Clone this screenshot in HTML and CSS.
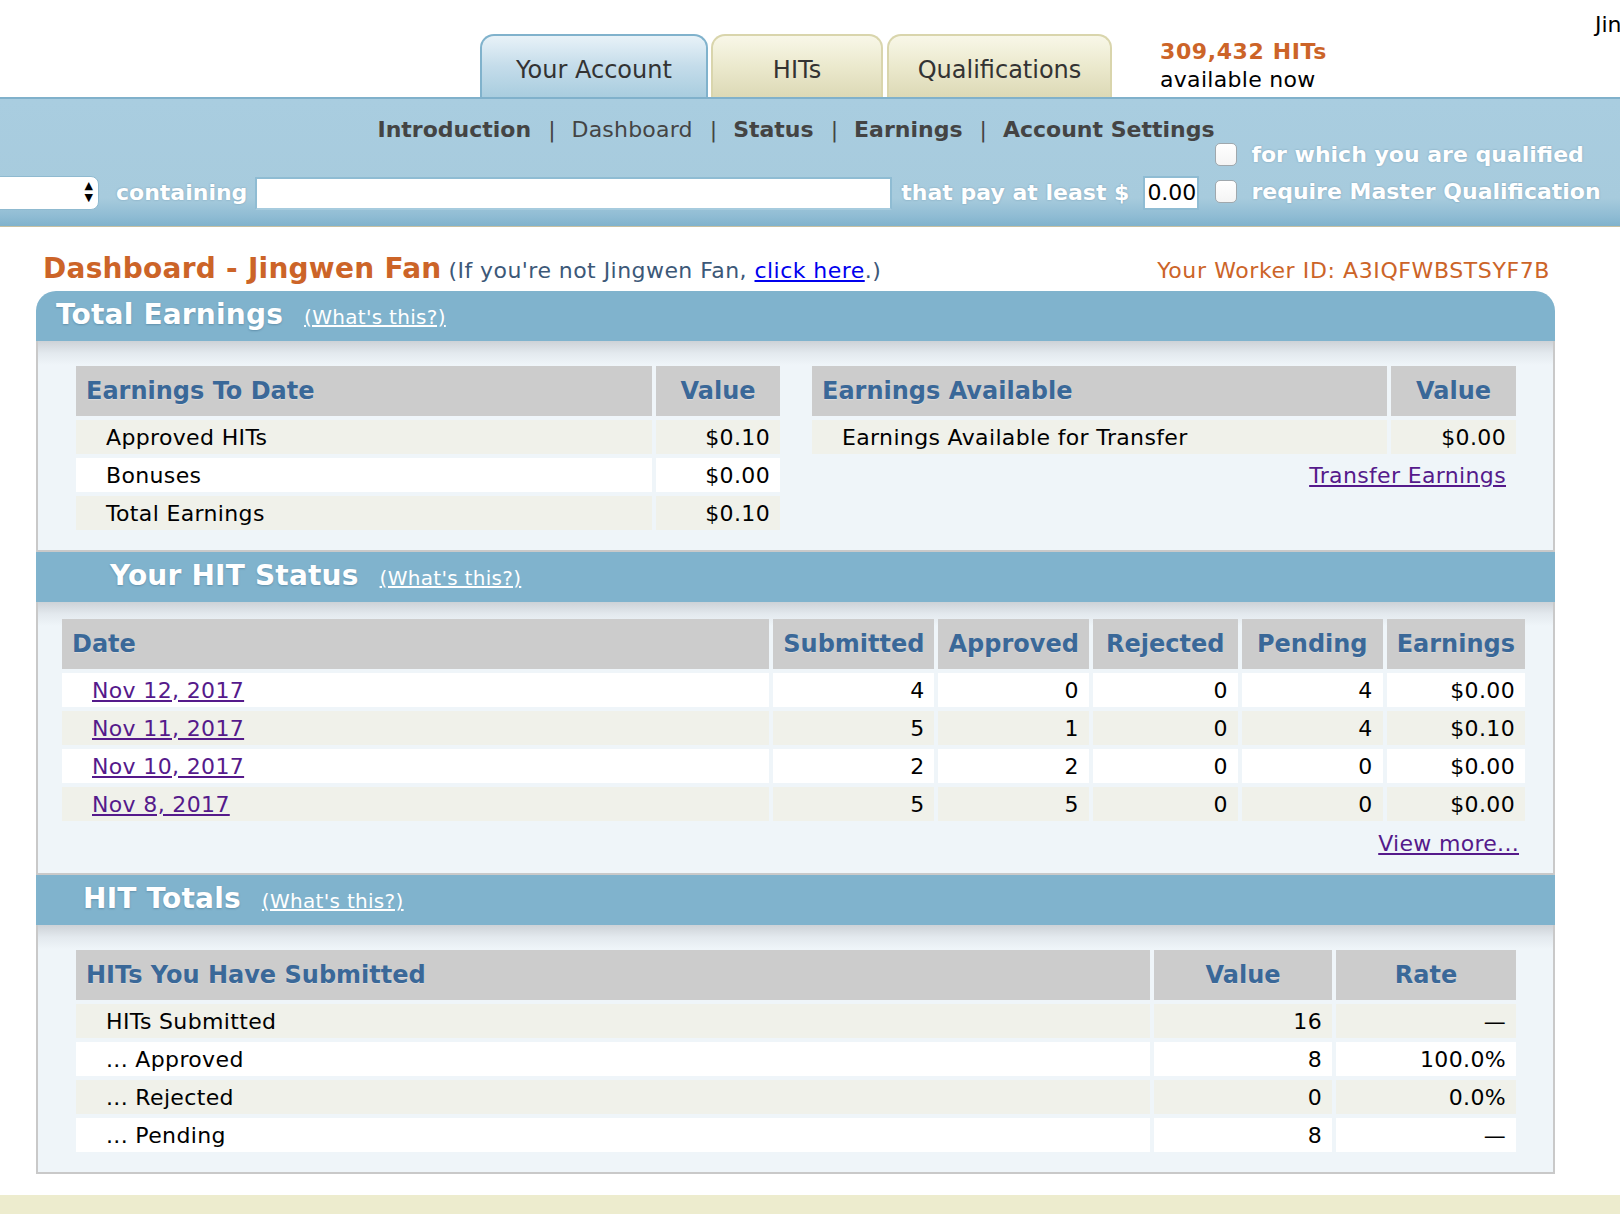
FILE: index.html
```html
<!DOCTYPE html>
<html>
<head>
<meta charset="utf-8">
<title>Dashboard</title>
<link rel="stylesheet" href="styles.css">
</head>
<body>
<div class="topbar">
  <div class="tabs">
    <div class="tab tab-active">Your Account</div>
    <div class="tab tab-hits">HITs</div>
    <div class="tab tab-quals">Qualifications</div>
  </div>
  <div class="hitcount">
    <div class="hitcount-num">309,432 HITs</div>
    <div class="hitcount-text">available now</div>
  </div>
  <div class="username">Jingwen Fan</div>
</div>

<div class="navbar">
  <div class="navlinks">
    <span class="nav-bold">Introduction</span><span class="sep">|</span><span class="nav-normal">Dashboard</span><span class="sep">|</span><span class="nav-bold">Status</span><span class="sep">|</span><span class="nav-bold">Earnings</span><span class="sep">|</span><span class="nav-bold">Account Settings</span>
  </div>
  <div class="searchrow">
    <div class="selectbox"><span class="arrows"><span>▲</span><span>▼</span></span></div>
    <span class="formlabel lbl-containing">containing</span>
    <div class="textinput"></div>
    <span class="formlabel lbl-pay">that pay at least $</span>
    <div class="moneyinput">0.00</div>
    <div class="checks">
      <div class="checkline"><span class="checkbox"></span><span class="formlabel">for which you are qualified</span></div>
      <div class="checkline"><span class="checkbox"></span><span class="formlabel">require Master Qualification</span></div>
    </div>
  </div>
</div>

<div class="titlerow">
  <div class="title-left"><span class="dash-title">Dashboard - Jingwen Fan</span> <span class="notyou">(If you're not Jingwen Fan, <a class="blue-link" href="#">click here</a>.)</span></div>
  <div class="workerid">Your Worker ID: A3IQFWBSTSYF7B</div>
</div>

<div class="panel">
  <div class="panel-head head-first head-earn"><span class="head-title">Total Earnings</span><a class="whats" href="#">(What's this?)</a></div>
  <div class="panel-body body-earn">
    <table class="grid">
      <colgroup><col style="width:576px"><col style="width:124px"></colgroup>
      <tr><th class="th-left">Earnings To Date</th><th>Value</th></tr>
      <tr class="odd"><td class="lbl">Approved HITs</td><td class="num">$0.10</td></tr>
      <tr class="even"><td class="lbl">Bonuses</td><td class="num">$0.00</td></tr>
      <tr class="odd"><td class="lbl">Total Earnings</td><td class="num">$0.10</td></tr>
    </table>
    <table class="grid">
      <colgroup><col style="width:575px"><col style="width:125px"></colgroup>
      <tr><th class="th-left">Earnings Available</th><th>Value</th></tr>
      <tr class="odd"><td class="lbl">Earnings Available for Transfer</td><td class="num">$0.00</td></tr>
      <tr><td class="num" colspan="2"><a class="purple-link" href="#">Transfer Earnings</a></td></tr>
    </table>
  </div>

  <div class="panel-head head-status"><span class="head-title">Your HIT Status</span><a class="whats" href="#">(What's this?)</a></div>
  <div class="panel-body body-status">
    <table class="grid">
      <colgroup><col style="width:712px"><col style="width:159px"><col style="width:148px"><col style="width:145px"><col style="width:141px"><col style="width:138px"></colgroup>
      <tr><th class="th-left">Date</th><th>Submitted</th><th>Approved</th><th>Rejected</th><th>Pending</th><th>Earnings</th></tr>
      <tr class="even"><td class="lbl"><a class="purple-link" href="#">Nov 12, 2017</a></td><td class="num">4</td><td class="num">0</td><td class="num">0</td><td class="num">4</td><td class="num">$0.00</td></tr>
      <tr class="odd"><td class="lbl"><a class="purple-link" href="#">Nov 11, 2017</a></td><td class="num">5</td><td class="num">1</td><td class="num">0</td><td class="num">4</td><td class="num">$0.10</td></tr>
      <tr class="even"><td class="lbl"><a class="purple-link" href="#">Nov 10, 2017</a></td><td class="num">2</td><td class="num">2</td><td class="num">0</td><td class="num">0</td><td class="num">$0.00</td></tr>
      <tr class="odd"><td class="lbl"><a class="purple-link" href="#">Nov 8, 2017</a></td><td class="num">5</td><td class="num">5</td><td class="num">0</td><td class="num">0</td><td class="num">$0.00</td></tr>
    </table>
    <div class="viewmore"><a class="purple-link" href="#">View more...</a></div>
  </div>

  <div class="panel-head head-totals"><span class="head-title">HIT Totals</span><a class="whats" href="#">(What's this?)</a></div>
  <div class="panel-body body-totals">
    <table class="grid">
      <colgroup><col style="width:1074px"><col style="width:178px"><col style="width:180px"></colgroup>
      <tr><th class="th-left">HITs You Have Submitted</th><th>Value</th><th>Rate</th></tr>
      <tr class="odd"><td class="lbl">HITs Submitted</td><td class="num">16</td><td class="num">—</td></tr>
      <tr class="even"><td class="lbl">... Approved</td><td class="num">8</td><td class="num">100.0%</td></tr>
      <tr class="odd"><td class="lbl">... Rejected</td><td class="num">0</td><td class="num">0.0%</td></tr>
      <tr class="even"><td class="lbl">... Pending</td><td class="num">8</td><td class="num">—</td></tr>
    </table>
  </div>
</div>

<div class="footerband"></div>
</body>
</html>
```

FILE: styles.css
```css
html, body {
  margin: 0;
  padding: 0;
  background: #ffffff;
  overflow-x: hidden;
}

body {
  font-family: "DejaVu Sans", Verdana, sans-serif;
  font-size: 22px;
  color: #000;
  width: 1620px;
}

/* ---------- top tabs ---------- */
.topbar {
  display: flex;
  height: 97px;
  white-space: nowrap;
}

.topbar > * {
  flex-shrink: 0;
}

.tabs {
  display: flex;
  align-items: flex-end;
  padding-left: 480px;
}

.tab {
  box-sizing: border-box;
  flex-shrink: 0;
  height: 63px;
  padding-top: 19px;
  line-height: 30px;
  text-align: center;
  font-size: 24px;
  color: #333;
  border: 2px solid;
  border-bottom: none;
  border-radius: 14px 14px 0 0;
}

.tab-active {
  width: 228px;
  background: linear-gradient(to bottom, #e8f2f8 0%, #c4dcea 50%, #a9cddf 100%);
  border-color: #80b2cc;
}

.tab-hits {
  width: 172px;
  margin-left: 3px;
  background: linear-gradient(to bottom, #f8f7e8 0%, #ebe9cd 50%, #dcd9b6 100%);
  border-color: #d9d5ac;
}

.tab-quals {
  width: 225px;
  margin-left: 4px;
  background: linear-gradient(to bottom, #f8f7e8 0%, #ebe9cd 50%, #dcd9b6 100%);
  border-color: #d9d5ac;
}

.hitcount {
  width: 200px;
  margin-left: 48px;
  margin-top: 38px;
  line-height: 28px;
}

.hitcount-num {
  font-weight: bold;
  color: #cc6428;
  letter-spacing: 0.6px;
}

.hitcount-text {
  color: #000;
  letter-spacing: 0.3px;
}

.username {
  margin-left: 235px;
  margin-top: 11px;
  line-height: 28px;
}

/* ---------- blue nav bar ---------- */
.navbar {
  border-top: 2px solid #80b1cb;
  border-bottom: 1px solid #c6c0a2;
  background: linear-gradient(to bottom, #a9cde0 0%, #a7cbdd 78%, #8ebbd3 93%, #80b2cc 100%);
  padding-bottom: 16px;
  white-space: nowrap;
}

.navlinks {
  box-sizing: border-box;
  height: 37px;
  padding-top: 18px;
  padding-right: 28px;
  line-height: 26px;
  display: flex;
  justify-content: center;
  color: #444;
}

.nav-bold {
  font-weight: bold;
  color: #444;
}

.nav-normal {
  color: #444;
  letter-spacing: 0.2px;
}

.sep {
  margin: 0 16px 0 17px;
  color: #444;
}

.searchrow {
  display: flex;
  align-items: flex-end;
  height: 74px;
}

.searchrow > * {
  flex-shrink: 0;
}

.selectbox {
  box-sizing: border-box;
  width: 119px;
  height: 34px;
  margin-left: -20px;
  background: #fff;
  border: 1px solid #8fbad0;
  border-radius: 8px;
  position: relative;
}

.arrows {
  position: absolute;
  right: 5px;
  top: 3px;
  display: flex;
  flex-direction: column;
  font-size: 11px;
  line-height: 12px;
  color: #000;
}

.formlabel {
  font-weight: bold;
  color: #fff;
  line-height: 34px;
  text-shadow: 0 0 2px rgba(60, 100, 130, 0.45);
}

.lbl-containing {
  margin-left: 17px;
}

.textinput {
  box-sizing: border-box;
  width: 637px;
  height: 33px;
  margin-left: 8px;
  background: #fff;
  border: 2px solid #8fbcd3;
  border-bottom-color: #a6cbde;
}

.lbl-pay {
  margin-left: 9px;
}

.moneyinput {
  box-sizing: border-box;
  width: 56px;
  height: 34px;
  margin-left: 14px;
  background: #fff;
  border: 2px solid #8fbcd3;
  line-height: 30px;
  padding-left: 2px;
  color: #000;
  font-size: 22px;
}

.checks {
  display: flex;
  flex-direction: column;
  margin-left: 16px;
}

.checkline {
  display: flex;
  align-items: center;
  height: 37px;
}

.checkline .formlabel {
  margin-left: 14px;
}

.checkbox {
  box-sizing: border-box;
  width: 22px;
  height: 23px;
  background: linear-gradient(to bottom, #ffffff 0%, #f4f4f4 100%);
  border: 1px solid #a0a8ad;
  border-radius: 5px;
}

/* ---------- title row ---------- */
.titlerow {
  display: flex;
  justify-content: space-between;
  align-items: baseline;
  height: 40px;
  margin: 22px 0 2px 0;
  padding-left: 43px;
  padding-right: 70px;
  line-height: 40px;
  white-space: nowrap;
}

.dash-title {
  font-size: 28px;
  font-weight: bold;
  color: #cc6428;
  letter-spacing: 0.25px;
}

.notyou {
  color: #3c5878;
  letter-spacing: 0.45px;
}

.blue-link {
  color: #0000ee;
  text-decoration: underline;
}

.workerid {
  color: #cc6428;
  letter-spacing: 0.6px;
}

/* ---------- panels ---------- */
.panel {
  margin-left: 36px;
  width: 1519px;
}

.panel-head {
  box-sizing: border-box;
  height: 50px;
  background: #80b3cd;
  display: flex;
  align-items: baseline;
  padding-top: 7px;
  white-space: nowrap;
}

.head-first {
  border-radius: 20px 20px 0 0;
}

.head-earn { padding-left: 20px; }
.head-status { padding-left: 74px; }
.head-totals { padding-left: 47px; }

.head-title {
  font-size: 28px;
  font-weight: bold;
  color: #fff;
  line-height: 34px;
  letter-spacing: 0.2px;
  text-shadow: 0 1px 2px rgba(40, 80, 110, 0.35);
}

.whats {
  margin-left: 21px;
  font-size: 20px;
  color: #fff;
  text-decoration: underline;
  letter-spacing: 0.3px;
}

.panel-body {
  border: 2px solid #c9c9c9;
  border-top: none;
  background: linear-gradient(to bottom, #cdd2d7 0px, #e3e9ee 12px, #eff5f9 24px, #eff5f9 100%);
}

.body-earn {
  display: grid;
  grid-template-columns: 712px 712px;
  column-gap: 24px;
  padding: 21px 33px 16px 34px;
  align-items: start;
}

.body-status {
  padding: 13px 24px 10px 20px;
}

.body-totals {
  padding: 21px 33px 16px 34px;
}

/* ---------- tables ---------- */
.grid {
  border-collapse: separate;
  border-spacing: 4px;
  table-layout: fixed;
}

.grid th {
  height: 50px;
  padding: 0 10px;
  background: #cccccc;
  color: #3a6898;
  font-size: 24px;
  font-weight: bold;
  text-align: center;
  white-space: nowrap;
  text-shadow: 0 1px 1px rgba(255, 255, 255, 0.3);
}

.grid th.th-left {
  text-align: left;
}

.grid td {
  height: 34px;
  padding: 0 10px;
  font-size: 22px;
  white-space: nowrap;
  letter-spacing: 0.35px;
}

.grid td.lbl {
  padding-left: 30px;
}

.grid td.num {
  text-align: right;
}

.odd td {
  background: #f0f1ea;
}

.even td {
  background: #ffffff;
}

.purple-link {
  color: #551a8b;
  text-decoration: underline;
}

.viewmore {
  text-align: right;
  line-height: 38px;
  padding-right: 10px;
  letter-spacing: 0.3px;
}

.footerband {
  margin-top: 21px;
  height: 20px;
  background: #edecce;
}
```
